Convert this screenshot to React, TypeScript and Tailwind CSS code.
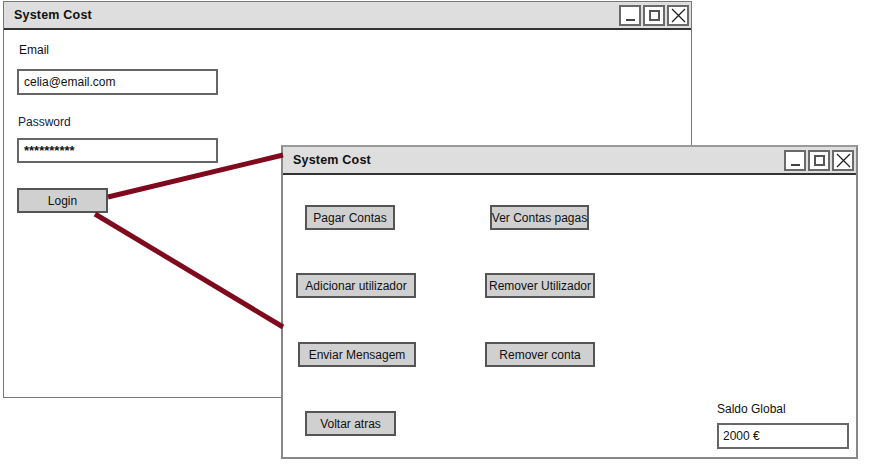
import React from 'react'

const font = { fontFamily: '"Liberation Sans", "DejaVu Sans", sans-serif' }

function Controls() {
  return (
    <div className="flex gap-[2px]">
      <div className="w-[22px] h-[21px] border-2 border-[#6a6a6a] bg-white flex items-end justify-center pb-[3px]">
        <div className="w-[9px] h-[2px] bg-[#444]" />
      </div>
      <div className="w-[22px] h-[21px] border-2 border-[#6a6a6a] bg-white flex items-center justify-center">
        <div className="w-[11px] h-[11px] border-2 border-[#555]" />
      </div>
      <div className="w-[22px] h-[21px] border-2 border-[#6a6a6a] bg-white flex items-center justify-center">
        <svg width="15" height="15" viewBox="0 0 15 15">
          <path d="M1 1 L14 14 M14 1 L1 14" stroke="#222" strokeWidth="1.3" />
        </svg>
      </div>
    </div>
  )
}

function TitleBar({ right }: { right: string }) {
  return (
    <div className={`h-[28px] bg-[#dedede] border-b-2 border-[#333] flex items-center justify-between pl-[10px] ${right}`}>
      <span className="text-[12.5px] font-bold text-[#111] tracking-[0.2px]">System Cost</span>
      <Controls />
    </div>
  )
}

function Btn({ label, className }: { label: string; className: string }) {
  return (
    <div className={`h-[25px] bg-[#d0d0d0] border-2 border-[#555] flex items-center justify-center text-[12px] text-[#111] whitespace-nowrap ${className}`}>
      {label}
    </div>
  )
}

export default function App() {
  return (
    <div className="relative w-[877px] h-[472px] bg-white overflow-hidden" style={font}>
      {/* janela de login */}
      <div className="absolute left-[3px] top-[1px] w-[689px] h-[397px] border border-[#777] bg-white">
        <TitleBar right="pr-[2px]" />
        <div className="pl-[13px] pt-[12px] flex flex-col items-start">
          <span className="text-[12px] leading-[16px] text-[#111] ml-[2px]">Email</span>
          <div className="mt-[11px] w-[201px] h-[26px] border-2 border-[#666] flex items-center px-[5px] text-[12px] text-[#111]">
            celia@email.com
          </div>
          <span className="mt-[19px] text-[12px] leading-[16px] text-[#112244] ml-[1px]">Password</span>
          <div className="mt-[8px] w-[201px] h-[25px] border-2 border-[#666] flex items-center px-[5px] text-[13px] font-bold text-[#111]">
            **********
          </div>
          <Btn label="Login" className="mt-[25px] w-[91px]" />
        </div>
      </div>

      {/* janela principal */}
      <div className="absolute left-[281px] top-[145px] w-[577px] h-[314px] border-2 border-[#888] border-t-[#999] bg-white">
        <TitleBar right="pr-[2px]" />
        <div className="flex flex-col">
          <div className="flex mt-[30px]">
            <Btn label="Pagar Contas" className="ml-[22px] w-[90px]" />
            <Btn label="Ver Contas pagas" className="ml-[95px] w-[99px]" />
          </div>
          <div className="flex mt-[43px]">
            <Btn label="Adicionar utilizador" className="ml-[13px] w-[120px]" />
            <Btn label="Remover Utilizador" className="ml-[69px] w-[110px]" />
          </div>
          <div className="flex mt-[44px]">
            <Btn label="Enviar Mensagem" className="ml-[15px] w-[118px]" />
            <Btn label="Remover conta" className="ml-[69px] w-[110px]" />
          </div>
          <div className="flex items-start mt-[34px]">
            <Btn label="Voltar atras" className="ml-[22px] mt-[10px] w-[91px]" />
            <div className="ml-[321px] flex flex-col items-start">
              <span className="text-[12px] leading-[16px] text-[#111]">Saldo Global</span>
              <div className="mt-[6px] w-[132px] h-[26px] border-2 border-[#666] flex items-center px-[4px] text-[12px] text-[#111]">
                2000 €
              </div>
            </div>
          </div>
        </div>
      </div>

      {/* ligações */}
      <svg className="absolute inset-0 pointer-events-none" width="877" height="472">
        <line x1="108" y1="197" x2="283" y2="155" stroke="#7f0a1e" strokeWidth="5" />
        <line x1="95" y1="214" x2="283" y2="327" stroke="#7f0a1e" strokeWidth="5" />
      </svg>
    </div>
  )
}
